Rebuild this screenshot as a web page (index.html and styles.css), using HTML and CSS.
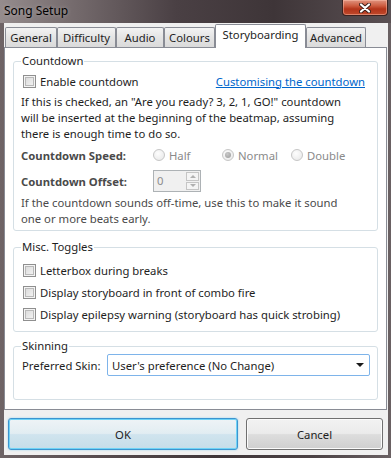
FILE: index.html
```html
<!DOCTYPE html>
<html lang="en">
  <head>
    <meta charset="utf-8" />
    <link rel="stylesheet" href="styles.css">
    <title>Song Setup</title>
  </head>
  <body>
    <div class="window">
      <div class="titlebar">
        <div class="caption">Song Setup</div>
        <div class="close-btn">
          <svg width="12" height="10" viewBox="0 0 12 10">
            <path d="M2 1.5 L10 8.5 M10 1.5 L2 8.5" stroke="#3b1d18" stroke-width="4" stroke-linecap="round" />
            <path d="M2 1.5 L10 8.5 M10 1.5 L2 8.5" stroke="#ffffff" stroke-width="2.2" stroke-linecap="round" />
          </svg>
        </div>
      </div>

      <div class="client">
        <div class="tabs">
          <div class="tab tab-general">General</div>
          <div class="tab tab-difficulty">Difficulty</div>
          <div class="tab tab-audio">Audio</div>
          <div class="tab tab-colours">Colours</div>
          <div class="tab tab-storyboard active">Storyboarding</div>
          <div class="tab tab-advanced">Advanced</div>
        </div>

        <div class="pane">
          <fieldset class="group group-countdown">
            <legend>Countdown</legend>
            <div class="row row-enable">
              <label class="check"><span class="box"></span>Enable countdown</label>
              <a class="link" href="#">Customising the countdown</a>
            </div>
            <p class="note note-main">
              If this is checked, an "Are you ready? 3, 2, 1, GO!" countdown<br />
              will be inserted at the beginning of the beatmap, assuming<br />
              there is enough time to do so.
            </p>
            <div class="row row-speed">
              <span class="field-label">Countdown Speed:</span>
              <span class="radio"><span class="dot"></span>Half</span>
              <span class="radio"><span class="dot checked"></span>Normal</span>
              <span class="radio"><span class="dot"></span>Double</span>
            </div>
            <div class="row row-offset">
              <span class="field-label">Countdown Offset:</span>
              <div class="spinner">
                <span class="spin-value">0</span>
                <span class="spin-arrows">
                  <span class="spin-btn"><span class="arrow-up"></span></span>
                  <span class="spin-btn"><span class="arrow-down"></span></span>
                </span>
              </div>
            </div>
            <p class="note note-sub">
              If the countdown sounds off-time, use this to make it sound<br />
              one or more beats early.
            </p>
          </fieldset>

          <fieldset class="group group-misc">
            <legend>Misc. Toggles</legend>
            <label class="check row-check"><span class="box"></span>Letterbox during breaks</label>
            <label class="check row-check"><span class="box"></span>Display storyboard in front of combo fire</label>
            <label class="check row-check"><span class="box"></span>Display epilepsy warning (storyboard has quick strobing)</label>
          </fieldset>

          <fieldset class="group group-skin">
            <legend>Skinning</legend>
            <div class="row row-skin">
              <span class="skin-label">Preferred Skin:</span>
              <div class="select">
                <span>User's preference (No Change)</span>
                <span class="select-arrow"></span>
              </div>
            </div>
          </fieldset>
        </div>

        <div class="buttons">
          <button type="button" class="btn btn-ok">OK</button>
          <button type="button" class="btn btn-cancel">Cancel</button>
        </div>
      </div>
    </div>
  </body>
</html>
```

FILE: styles.css
```css
* {
  box-sizing: border-box;
}
body {
  margin: 0;
  font-family: "Noto Sans", "Open Sans", sans-serif;
  font-size: 11.3px;
  color: #1e1e1e;
}
.window {
  width: 391px;
  height: 458px;
  display: flex;
  flex-direction: column;
  background: linear-gradient(90deg, #6e6466 0%, #574c4f 25%, #3f3639 55%, #4b4245 80%, #6a6163 100%);
}
.titlebar {
  height: 23px;
  display: flex;
  justify-content: space-between;
  align-items: flex-start;
  background: linear-gradient(90deg, #958c8d 0%, #766c6e 18%, #4a4044 45%, #3e3538 70%, #5a5053 100%);
}
.caption {
  padding: 3px 0 0 4px;
  font-size: 12px;
  line-height: 16px;
  color: #000000;
  text-shadow: 0 0 4px rgba(255, 255, 255, 0.35);
}
.close-btn {
  width: 46px;
  height: 16px;
  margin-right: 3px;
  display: flex;
  align-items: center;
  justify-content: center;
  border: 1px solid #3a2220;
  border-top: none;
  border-radius: 0 0 4px 4px;
  background: linear-gradient(#e0937f 0%, #cc5a3e 40%, #b3341a 60%, #c04a2c 100%);
  box-shadow: inset 0 0 0 1px rgba(255, 200, 180, 0.45);
}

.client {
  flex: 1;
  margin: 0 3px 3px 4px;
  background: #f0f0f0;
}
.tabs {
  height: 24px;
  display: flex;
  align-items: flex-end;
  padding-left: 1px;
}
.tab {
  height: 20px;
  line-height: 19px;
  text-align: center;
  border: 1px solid #898c95;
  border-bottom: none;
  border-radius: 2px 2px 0 0;
  background: linear-gradient(#f3f3f3, #e4e4e4 50%, #dadada);
}
.tab-general { width: 52px; }
.tab-difficulty { width: 59px; }
.tab-audio { width: 48px; }
.tab-colours { width: 51px; }
.tab-storyboard { width: 91px; }
.tab-advanced { width: 60px; }
.tab.active {
  height: 24px;
  line-height: 20px;
  margin-bottom: -1px;
  position: relative;
  z-index: 1;
  background: #ffffff;
}

.pane {
  width: 383px;
  height: 363px;
  border: 1px solid #898c95;
  background: #ffffff;
  padding: 5px 8px 0 8px;
}
.group {
  margin: 0;
  padding: 0 7px;
  border: 1px solid #d5dfe5;
  border-radius: 3px;
  min-inline-size: 0;
}
.group legend {
  padding: 0 1px;
  line-height: 16px;
  color: #1e1e1e;
}
.row {
  display: flex;
  align-items: center;
}
.check {
  display: flex;
  align-items: center;
  gap: 4px;
  margin-left: 2px;
}
.box {
  width: 13px;
  height: 13px;
  border: 1px solid #8f8f8f;
  background: linear-gradient(135deg, #d6d6d6, #f7f7f7);
  box-shadow: inset 0 0 0 1px #f4f4f4, inset 0 0 0 2px #b9b9b9;
}

.group-countdown {
  padding-top: 2px;
  padding-bottom: 3px;
}
.row-enable {
  height: 20px;
  justify-content: space-between;
}
.link {
  margin-right: 5px;
  color: #0066cc;
}
.note {
  margin: 0;
  line-height: 16px;
}
.note-main {
  margin-top: 3px;
  color: #1e1e1e;
}
.row-speed {
  height: 20px;
  margin-top: 3px;
}
.field-label {
  width: 132px;
  font-weight: bold;
  color: #4a4a4a;
}
.radio {
  width: 69px;
  display: flex;
  align-items: center;
  gap: 4px;
  color: #8a8a8a;
}
.dot {
  width: 12px;
  height: 12px;
  border-radius: 50%;
  border: 1px solid #c6c6c6;
  background: radial-gradient(circle at 40% 35%, #fdfdfd, #e6e6e6);
  display: flex;
  align-items: center;
  justify-content: center;
}
.dot.checked::after {
  content: "";
  width: 6px;
  height: 6px;
  border-radius: 50%;
  background: radial-gradient(circle at 40% 35%, #c9c9c9, #9a9a9a);
}
.row-offset {
  height: 22px;
  margin-top: 5px;
}
.spinner {
  width: 48px;
  height: 22px;
  display: flex;
  border: 1px solid #adb2b5;
  background: #f0f0f0;
}
.spin-value {
  flex: 1;
  padding-left: 3px;
  line-height: 19px;
  color: #8d8d8d;
}
.spin-arrows {
  width: 14px;
  display: flex;
  flex-direction: column;
  gap: 1px;
  padding: 1px 1px 1px 0;
}
.spin-btn {
  flex: 1;
  display: flex;
  align-items: center;
  justify-content: center;
  border: 1px solid #c5c5c5;
  background: #f4f4f4;
}
.arrow-up {
  border-left: 3px solid transparent;
  border-right: 3px solid transparent;
  border-bottom: 3px solid #b0b0b0;
}
.arrow-down {
  border-left: 3px solid transparent;
  border-right: 3px solid transparent;
  border-top: 3px solid #b0b0b0;
}
.note-sub {
  margin-top: 3px;
  color: #4a4a4a;
}

.group-misc {
  margin-top: 8px;
  padding-top: 4px;
  padding-bottom: 6px;
}
.row-check {
  height: 22px;
}

.group-skin {
  margin-top: 6px;
  padding-top: 0;
  padding-bottom: 23px;
}
.row-skin {
  height: 22px;
}
.skin-label {
  width: 86px;
  padding-left: 1px;
}
.select {
  width: 263px;
  height: 22px;
  display: flex;
  align-items: center;
  justify-content: space-between;
  padding: 0 5px 0 4px;
  border: 1px solid #7eb4ea;
  border-radius: 2px;
  background: #ffffff;
}
.select-arrow {
  border-left: 4px solid transparent;
  border-right: 4px solid transparent;
  border-top: 4px solid #1a1a1a;
}

.buttons {
  display: flex;
  gap: 8px;
  margin-top: 8px;
  padding-left: 4px;
}
.btn {
  height: 32px;
  font-family: inherit;
  font-size: 11.3px;
  color: #1e1e1e;
  border-radius: 3px;
}
.btn-ok {
  width: 230px;
  border: 1px solid #3c94cf;
  background: linear-gradient(#eef3f6 0%, #e2edf2 48%, #d0e4ee 52%, #c5dde9 100%);
  box-shadow: inset 0 0 0 1px #6fd3f6, 0 0 2px rgba(80, 190, 240, 0.6);
}
.btn-cancel {
  width: 137px;
  border: 1px solid #707070;
  background: linear-gradient(#f2f2f2 0%, #ebebeb 48%, #dddddd 52%, #cfcfcf 100%);
  box-shadow: inset 0 0 0 1px #fbfbfb;
}
```
